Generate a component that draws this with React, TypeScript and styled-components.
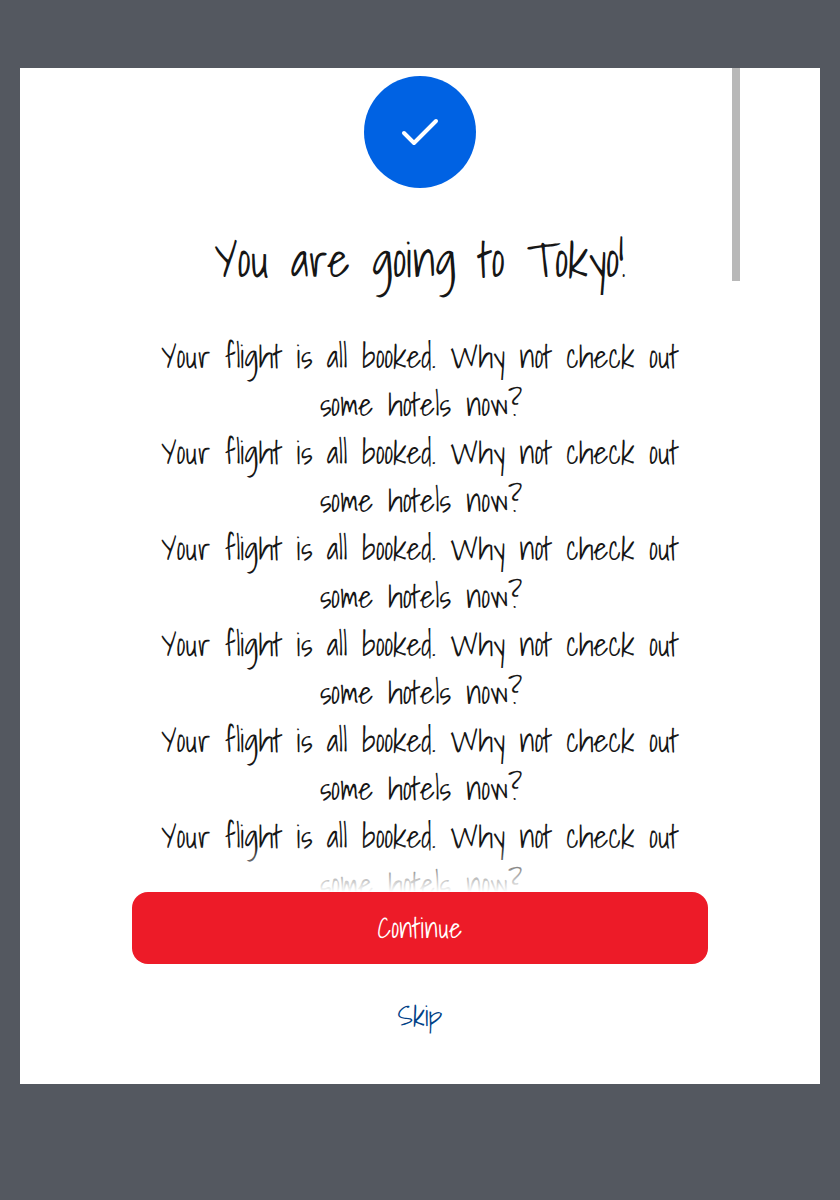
import React from 'react';
import styled, { createGlobalStyle } from 'styled-components';

const GlobalStyle = createGlobalStyle`
  * { box-sizing: border-box; }
  body {
    margin: 0;
    background: #545860;
    font-family: 'Shadows Into Light', cursive;
    color: #161616;
    text-rendering: geometricPrecision;
    -webkit-font-smoothing: antialiased;
  }
`;

const Screen = styled.div`
  height: 1200px;
  padding: 68px 20px 116px;
  background: #545860;
`;

const Dialog = styled.main`
  height: 1016px;
  display: flex;
  flex-direction: column;
  align-items: center;
  background: #fff;
`;

const ScrollArea = styled.section`
  position: relative;
  width: 640px;
  height: 824px;
  padding: 8px 32px 0;
  overflow: hidden;
`;

const ScrollThumb = styled.div`
  position: absolute;
  top: 0;
  right: 0;
  width: 8px;
  height: 213px;
  background: #b8b8b8;
`;

const BottomFade = styled.div`
  position: absolute;
  left: 0;
  right: 8px;
  bottom: 0;
  height: 48px;
  background: linear-gradient(rgba(255, 255, 255, 0), #fff);
`;

const Badge = styled.div`
  width: 112px;
  height: 112px;
  margin: 0 auto 40px;
  border-radius: 50%;
  display: grid;
  place-items: center;
  background: #0062e3;
`;

const Title = styled.h1`
  margin: 0 0 40px;
  font-size: 48px;
  line-height: 64px;
  font-weight: 400;
  text-align: center;
  word-spacing: 0.6px;
`;

const Message = styled.p`
  margin: 0;
  font-size: 32px;
  line-height: 48px;
  text-align: center;
`;

const Line = styled.span`
  display: block;

  &:last-child {
    padding-left: 2px;
    word-spacing: 0.5px;
  }
`;

const Actions = styled.footer`
  width: 576px;
  display: flex;
  flex-direction: column;
  gap: 16px;
`;

const Button = styled.button<{ $primary?: boolean }>`
  height: 72px;
  padding: 2px 0 0;
  border: 0;
  border-radius: 16px;
  font: inherit;
  font-size: 28px;
  line-height: 40px;
  letter-spacing: ${(p) => (p.$primary ? '0.2px' : 'normal')};
  text-rendering: inherit;
  color: ${(p) => (p.$primary ? '#fff' : '#004187')};
  background: ${(p) => (p.$primary ? '#ed1b28' : 'transparent')};
`;

const messages = Array.from({ length: 6 }, () => [
  'Your flight is all booked. Why not check out',
  'some hotels now?',
]);

export default function App() {
  return (
    <Screen>
      <GlobalStyle />
      <Dialog>
        <ScrollArea>
          <Badge>
            <svg width="48" height="48" viewBox="0 0 48 48" fill="none" aria-hidden="true">
              <path
                d="M8 25 L18 35 L40 13"
                stroke="#fff"
                strokeWidth="4"
                strokeLinecap="round"
                strokeLinejoin="round"
              />
            </svg>
          </Badge>
          <Title>You are going to Tokyo!</Title>
          {messages.map((lines, i) => (
            <Message key={i}>
              {lines.map((line) => (
                <Line key={line}>{line}</Line>
              ))}
            </Message>
          ))}
          <BottomFade />
          <ScrollThumb />
        </ScrollArea>
        <Actions>
          <Button $primary>Continue</Button>
          <Button>Skip</Button>
        </Actions>
      </Dialog>
    </Screen>
  );
}
